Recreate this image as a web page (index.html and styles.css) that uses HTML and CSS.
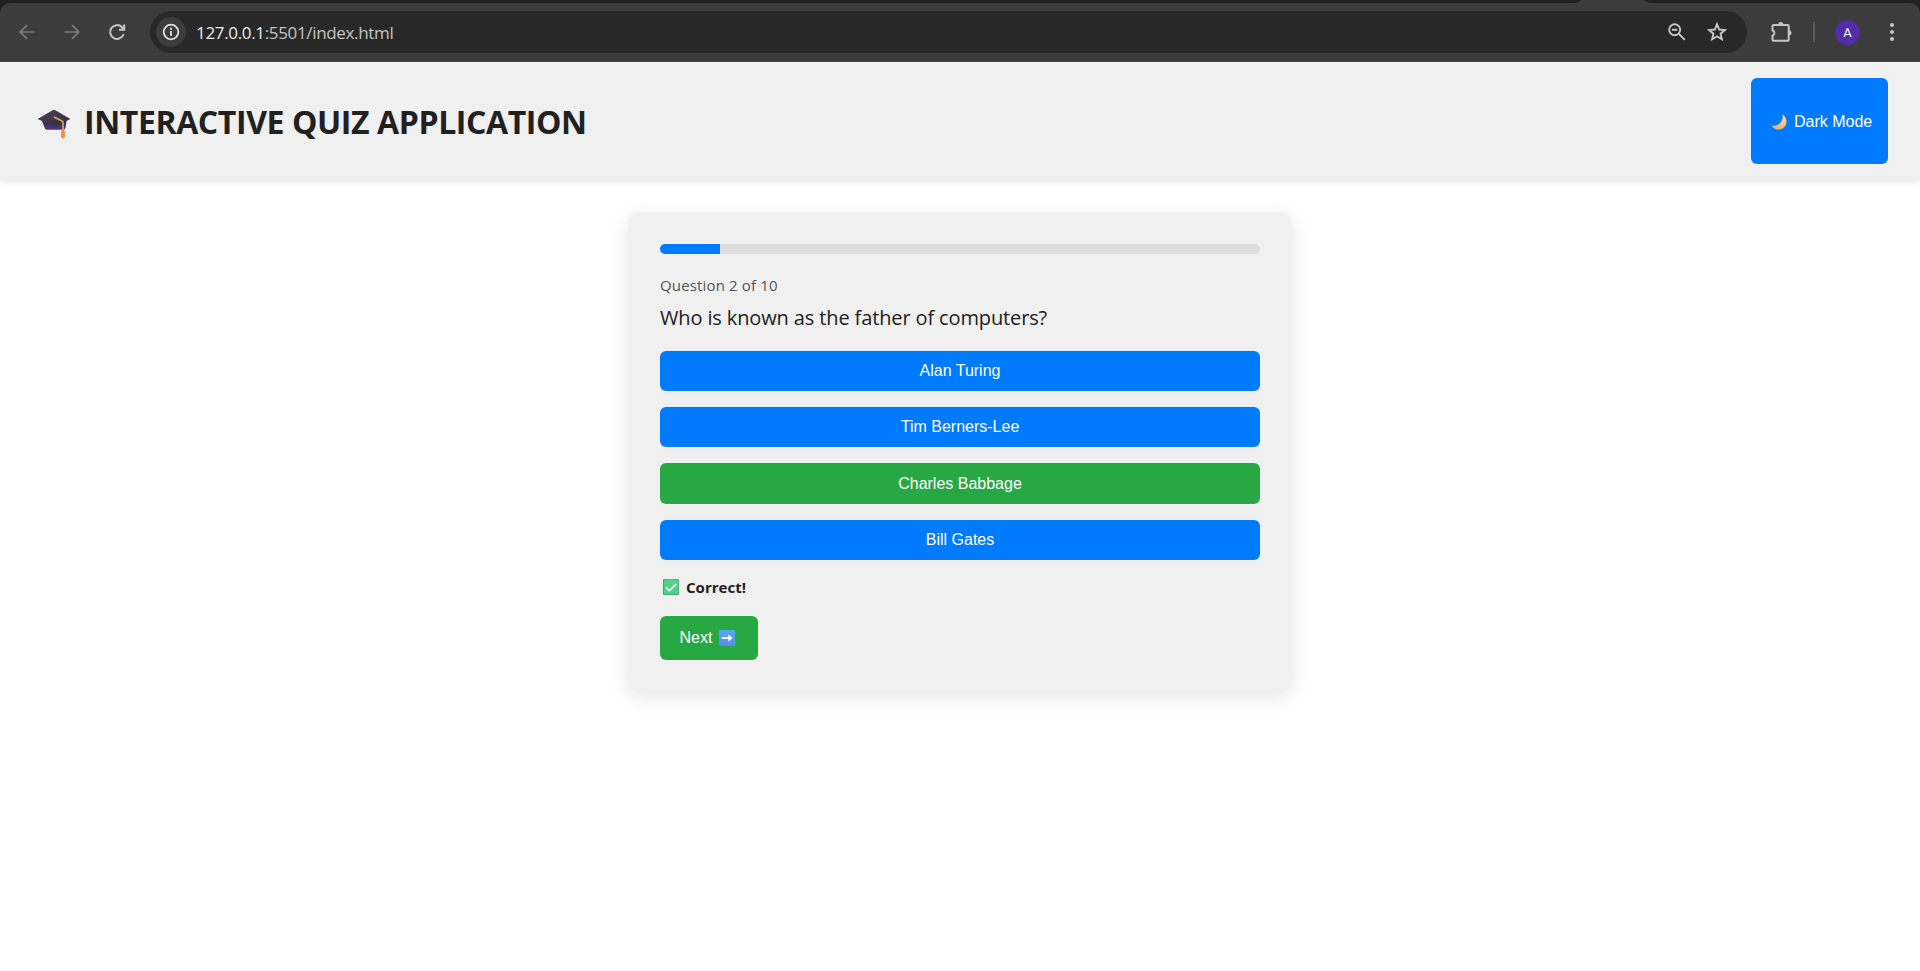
FILE: index.html
```html
<!DOCTYPE html>
<html lang="en">
<head>
<meta charset="utf-8">
<title>Interactive Quiz Application</title>
<link rel="stylesheet" href="styles.css">
</head>
<body>
<div class="browser">
  <div class="tabstrip"><svg class="tab-foot" viewBox="0 0 78 3"><path d="M0 3Q5 2.500 7 0H70Q72 2.500 78 3z"/></svg></div>
  <div class="toolbar">
    <svg class="nav-icon dim" viewBox="0 0 20 20"><path d="M17.500 10H3.200M10 3.200 3.200 10l6.800 6.800"/></svg>
    <svg class="nav-icon dim" viewBox="0 0 20 20"><path d="M2.500 10h14.300M10 3.200l6.800 6.800-6.800 6.800"/></svg>
    <svg class="nav-icon" viewBox="0 0 20 20"><path d="M16.600 12.200A6.900 6.900 0 1 1 15 5.200l1.800 1.800M17.200 2.500v5.200H12"/></svg>
    <div class="address">
      <span class="info"><svg viewBox="0 0 18 18"><circle cx="9" cy="9" r="7.300"/><path d="M9 8v5M9 4.800v1.900"/></svg></span>
      <span class="url"><b>127.0.0.1</b>:5501/index.html</span>
      <svg class="addr-icon" viewBox="0 0 20 20"><circle cx="7.700" cy="7.700" r="5.500"/><path d="M11.700 11.700l6.100 6.100M5 7.700h5.400"/></svg>
      <svg class="addr-icon" viewBox="0 0 20 20"><path d="M10 2.200l2.200 5.300 5.700.5-4.300 3.700 1.300 5.600-4.900-3-4.900 3 1.300-5.600L2.100 8l5.700-.5z"/></svg>
    </div>
    <svg class="puzzle" viewBox="0 0 22 22"><path d="M3.500 4h14.200a1 1 0 0 1 1 1v13.800a1 1 0 0 1-1 1H3.500a1 1 0 0 1-1-1v-4a3 3 0 0 0 0-5.600V5a1 1 0 0 1 1-1z"/><path class="knob" d="M8.300 3.500a2.500 2.500 0 0 1 5 0zM19 9.300a2.500 2.500 0 0 1 0 5z"/></svg>
    <span class="divider"></span>
    <span class="avatar">A</span>
    <svg class="dots" viewBox="0 0 6 20"><circle cx="3" cy="3" r="2"/><circle cx="3" cy="10" r="2"/><circle cx="3" cy="17" r="2"/></svg>
  </div>
</div>
<header class="header">
  <h1 class="title">
    <svg class="cap" viewBox="0 0 34 30">
      <defs><linearGradient id="capBody" x1="0" y1="0" x2="0" y2="1"><stop offset="0" stop-color="#33264a"/><stop offset="1" stop-color="#50367c"/></linearGradient><linearGradient id="capTop" x1="0" y1="0" x2="1" y2="1"><stop offset="0" stop-color="#4b4257"/><stop offset="1" stop-color="#332b42"/></linearGradient></defs>
      <path fill="url(#capBody)" d="M4 9.500h26L28.500 18.500q-.5 2.200-2.500 2.200H10q-2 0-2.500-2.200z"/>
      <path fill="url(#capTop)" d="M.6 9.900 16 1.100q1-.6 2 0l15.400 8.800L19 16.800q-1.500.8-3 0z"/>
      <path fill="none" stroke="#d9ae3c" stroke-width="1.600" stroke-linecap="round" d="M17.500 8.200 25 12q1 .5 1 2v8"/>
      <path fill="#fb8b50" d="M25 19.500h2q1.300 3.500 1 7.500 0 2.500-2 2.500t-2-2.500q-.3-4 1-7.500z"/>
    </svg>
    <span class="title-text">INTERACTIVE QUIZ APPLICATION</span>
  </h1>
  <button class="theme">
    <svg class="moon" viewBox="0 0 16 16"><defs><linearGradient id="moonFill" x1="1" y1="0" x2="0" y2="1"><stop offset="0" stop-color="#ffe08a"/><stop offset="1" stop-color="#e9a06c"/></linearGradient></defs><path fill="url(#moonFill)" d="M11.300.6a8 8 0 1 1-11 10.600A8.600 8.600 0 0 0 11.300.6z"/></svg>
    <span>Dark Mode</span>
  </button>
</header>
<main class="quiz">
  <div class="progress"><div class="bar" style="width:10%"></div></div>
  <p class="count"><span>Question 2 of 10</span></p>
  <h2 class="question"><span>Who is known as the father of computers?</span></h2>
  <div class="options">
    <button class="option">Alan Turing</button>
    <button class="option">Tim Berners-Lee</button>
    <button class="option correct">Charles Babbage</button>
    <button class="option">Bill Gates</button>
  </div>
  <p class="feedback">
    <svg class="check" viewBox="0 0 16 16"><rect width="16" height="16" rx="1" fill="#3aa873"/><rect x="1" y=".5" width="14.500" height="14.500" rx="1" fill="#55cf8c"/><path d="M3 8.300l3.400 3.400L13.300 4.800" fill="none" stroke="#fff" stroke-width="1.600"/></svg>
    <span>Correct!</span>
  </p>
  <button class="next"><span>Next</span>
    <svg class="arrow" viewBox="0 0 16 16"><defs><linearGradient id="arrowFill" x1="0" y1="0" x2="0" y2="1"><stop offset="0" stop-color="#55a9f5"/><stop offset="1" stop-color="#5a8ce8"/></linearGradient></defs><rect width="16" height="16" rx="1" fill="url(#arrowFill)"/><path d="M2.700 8h9" fill="none" stroke="#fff" stroke-width="1.800"/><path d="M9.300 4.300 13.500 8l-4.200 3.700z" fill="#fff"/></svg>
  </button>
</main>
</body>
</html>
```
FILE: styles.css
```css
* { box-sizing: border-box; }
body { margin: 0; min-height: 100vh; background: #fff; color: #212121; font-family: "Open Sans", "Noto Sans", sans-serif; }
svg { display: block; flex: none; }
h1, h2, p { margin: 0; }
button { border: 0; color: #fff; font: 16px "Liberation Sans", Arial, sans-serif; }

.browser { height: 62px; background: #1f2120; }
.tabstrip { height: 3px; display: flex; justify-content: flex-end; }
.tab-foot { width: 78px; height: 3px; margin-right: 268px; fill: #3c3c3c; }
.toolbar { height: 59px; display: flex; align-items: center; background: #3c3c3c; border-radius: 10px 10px 0 0; border-bottom: 1px solid #4b4749; padding: 0 25px 0 17px; }
.nav-icon { width: 20px; height: 20px; margin-right: 25px; fill: none; stroke: #c7c7c7; stroke-width: 2; }
.nav-icon.dim { stroke: #7c7c7c; stroke-width: 1.700; }
.address { width: 1597px; height: 42px; margin: 0 23px 0 -2px; display: flex; align-items: center; border-radius: 21px; background: #282828; padding: 0 20px 0 6px; }
.info { width: 30px; height: 30px; border-radius: 50%; background: #3c3c3c; display: flex; align-items: center; justify-content: center; }
.info svg { width: 18px; height: 18px; fill: none; stroke: #dedede; stroke-width: 1.800; }
.url { flex: 1; margin-left: 10px; font-size: 17px; letter-spacing: -.34px; color: #c4c4c4; white-space: nowrap; }
.url b { font-weight: 400; color: #ececec; }
.addr-icon { width: 20px; height: 20px; fill: none; stroke: #c7c7c7; stroke-width: 1.900; }
.addr-icon + .addr-icon { margin-left: 20px; }
.puzzle { width: 22px; height: 22px; fill: none; stroke: #c7c7c7; stroke-width: 2; }
.puzzle .knob { fill: #c7c7c7; stroke: none; }
.divider { width: 2px; height: 20px; margin: 0 20px 0 21px; background: #5d5d5d; }
.avatar { width: 25px; height: 25px; border-radius: 50%; background: #512da8; color: #fff; font: 13px/25px Roboto, sans-serif; text-align: center; }
.dots { width: 6px; height: 20px; margin-left: 29px; fill: #c7c7c7; }

.header { height: 118px; padding: 16px 32px; display: flex; justify-content: space-between; align-items: stretch; background: #f0f0f0; box-shadow: 0 2px 5px rgba(0, 0, 0, .1); }
.title { display: flex; align-items: center; font-size: 32px; line-height: 44px; font-weight: 700; letter-spacing: -.4px; white-space: nowrap; }
.title-text { padding-top: 2px; }
.cap { width: 34px; height: 30px; margin: 6px 13px 0 5px; }
.theme { width: 137px; display: flex; align-items: center; border-radius: 6px; background: #007bff; padding: 2px 16px 0 20px; white-space: nowrap; }
.moon { width: 16px; height: 16px; margin: 0 7px 0 0; }

.quiz { width: 664px; height: 480px; margin: 32px auto 0; padding: 32px; border-radius: 12px; background: #f0f0f0; box-shadow: 0 5px 20px rgba(0, 0, 0, .1); }
.progress { height: 10px; border-radius: 5px; background: #ddd; overflow: hidden; }
.bar { height: 100%; background: #007bff; }
.count { margin-top: 20px; font-size: 15px; line-height: 22px; letter-spacing: .15px; color: #555; }
.question { margin-top: 8px; font-size: 20px; line-height: 28px; font-weight: 400; letter-spacing: -.13px; white-space: nowrap; }
.options { margin-top: 18.800px; display: grid; gap: 16px; }
.option { height: 40.300px; padding: 0; border-radius: 6px; background: #007bff; text-align: center; }
.option.correct { background: #28a745; }
.feedback { height: 22px; margin-top: 16px; padding-left: 3px; display: flex; align-items: center; gap: 7px; font-size: 15px; font-weight: 700; letter-spacing: .02px; }
.check { width: 16px; height: 16px; }
.next { width: 98px; height: 44px; margin-top: 18px; padding: 1px 20px 0 19.500px; display: flex; align-items: center; gap: 7px; border-radius: 6px; background: #28a745; }
.arrow { width: 16px; height: 16px; }
```
